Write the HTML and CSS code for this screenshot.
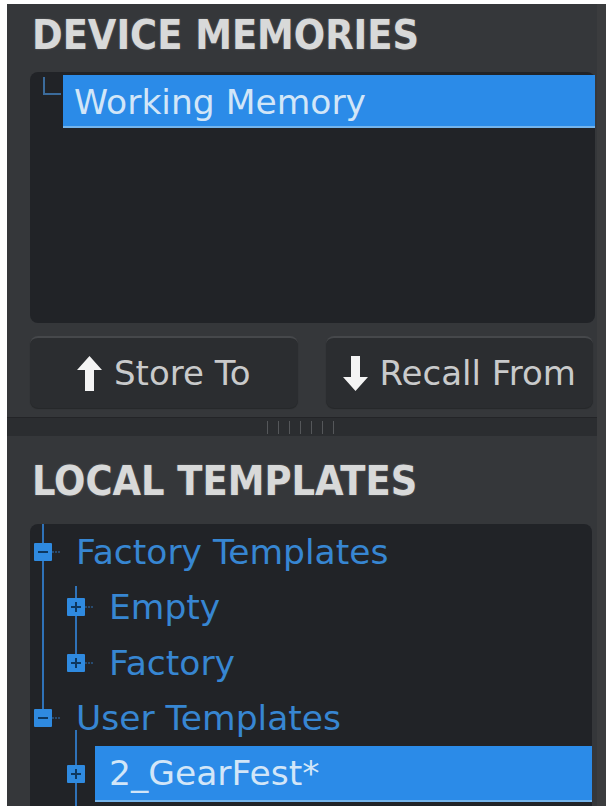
FILE: index.html
```html
<!DOCTYPE html>
<html lang="en">
<head>
  <meta charset="UTF-8">
  <title>Device Memories</title>
  <link rel="stylesheet" href="styles.css">
</head>
<body>
  <div class="panel">
    <section class="memories">
      <h2 class="heading">DEVICE MEMORIES</h2>
      <div class="list-box">
        <div class="mem-row">
          <span class="elbow"></span>
          <span class="mem-label">Working Memory</span>
        </div>
      </div>
      <div class="actions">
        <button class="action">
          <svg class="arrow" width="25" height="35" viewBox="0 0 25 35"><path d="M12.5 0 L25 14 H17 V35 H8 V14 H0 Z"/></svg>
          Store To
        </button>
        <button class="action">
          <svg class="arrow" width="25" height="35" viewBox="0 0 25 35"><path d="M12.5 35 L25 21 H17 V0 H8 V21 H0 Z"/></svg>
          Recall From
        </button>
      </div>
    </section>

    <div class="splitter"><span class="grip"></span></div>

    <section class="templates">
      <h2 class="heading">LOCAL TEMPLATES</h2>
      <div class="tree-box">
        <!-- connector lines of the tree -->
        <svg class="tree-lines" width="562" height="290">
          <line x1="13" y1="0" x2="13" y2="194"/>
          <line x1="46" y1="62" x2="46" y2="139"/>
          <line x1="46" y1="206" x2="46" y2="290"/>
          <line class="stub" x1="22" y1="28" x2="30" y2="28"/>
          <line class="stub" x1="22" y1="194" x2="30" y2="194"/>
          <line class="stub" x1="55" y1="83" x2="63" y2="83"/>
          <line class="stub" x1="55" y1="139" x2="63" y2="139"/>
        </svg>
        <div class="node lvl1">
          <svg class="toggle" viewBox="0 0 18 18"><rect width="18" height="18" rx="1"/><path d="M4 9 H14"/></svg>
          <span class="node-label">Factory Templates</span>
        </div>
        <div class="node lvl2">
          <svg class="toggle" viewBox="0 0 18 18"><rect width="18" height="18" rx="1"/><path d="M4 9 H14 M9 4 V14"/></svg>
          <span class="node-label">Empty</span>
        </div>
        <div class="node lvl2">
          <svg class="toggle" viewBox="0 0 18 18"><rect width="18" height="18" rx="1"/><path d="M4 9 H14 M9 4 V14"/></svg>
          <span class="node-label">Factory</span>
        </div>
        <div class="node lvl1">
          <svg class="toggle" viewBox="0 0 18 18"><rect width="18" height="18" rx="1"/><path d="M4 9 H14"/></svg>
          <span class="node-label">User Templates</span>
        </div>
        <div class="node lvl2 selected">
          <svg class="toggle" viewBox="0 0 18 18"><rect width="18" height="18" rx="1"/><path d="M4 9 H14 M9 4 V14"/></svg>
          <span class="node-label">2_GearFest*</span>
        </div>
      </div>
    </section>
  </div>
</body>
</html>
```

FILE: styles.css
```css
html, body {
  margin: 0;
  padding: 0;
  height: 100%;
  overflow: hidden;
  background: #fff;
  font-family: "DejaVu Sans", Verdana, sans-serif;
}
.panel {
  margin: 4px 0 0 7px;
  height: 802px;
  background: #35373a;
  border-right: 9px solid #3b3c3e;
  overflow: hidden;
}
.heading {
  margin: 0 0 0 2px;
  font-family: "DejaVu Sans Condensed", "DejaVu Sans", sans-serif;
  font-size: 41px;
  font-weight: bold;
  line-height: 48px;
  color: #d8d9d9;
  text-shadow: 0 0 2px rgba(255,255,255,0.25);
  white-space: nowrap;
}
.memories {
  padding: 7px 2px 0 23px;
}
.list-box {
  margin-top: 13px;
  height: 248px;
  padding-top: 3px;
  background: #212327;
  border-radius: 8px;
}
.mem-row {
  display: flex;
  height: 53px;
}
.elbow {
  width: 16px;
  height: 16px;
  margin: 2px 2px 0 13px;
  border-left: 2px solid #3b6b9b;
  border-bottom: 2px solid #3b6b9b;
}
.mem-label {
  flex: 1;
  display: flex;
  align-items: center;
  padding: 3px 0 0 11px;
  background: #2b8be8;
  border-bottom: 2px solid #74b4ec;
  color: #d2e6f8;
  font-size: 34.5px;
}
.actions {
  display: flex;
  gap: 28px;
  margin: 13px 2px 0 0;
}
.action {
  flex: 1;
  height: 72px;
  display: flex;
  align-items: center;
  justify-content: center;
  gap: 12px;
  padding: 0;
  background: #2b2d30;
  border: none;
  border-top: 2px solid #46484b;
  border-radius: 8px;
  color: #c9cacb;
  font-family: "DejaVu Sans", sans-serif;
  font-size: 34px;
  box-shadow: 0 1px 1px rgba(0,0,0,0.3);
}
.arrow {
  fill: #f4f4f4;
}
.splitter {
  margin-top: 9px;
  height: 18px;
  display: flex;
  justify-content: center;
  align-items: center;
  background: #2b2d30;
  border-top: 1px solid #232427;
}
.grip {
  width: 70px;
  height: 13px;
  background: repeating-linear-gradient(90deg, #55575a 0 1px, transparent 1px 11px);
}
.templates {
  padding: 21px 5px 0 23px;
}
.tree-box {
  position: relative;
  margin-top: 19px;
  height: 300px;
  background: #212327;
  border-radius: 8px 8px 0 0;
}
.tree-lines {
  position: absolute;
  left: 0;
  top: 0;
  stroke: #2f72b8;
  stroke-width: 2;
}
.tree-lines .stub {
  stroke-width: 1;
  stroke-dasharray: 2 1;
}
.node {
  display: flex;
  align-items: center;
  height: 55.5px;
  position: relative;
}
.toggle {
  width: 18px;
  height: 18px;
  margin-right: 10px;
  flex: none;
}
.toggle rect {
  fill: #2f8ae0;
}
.toggle path {
  stroke: #0e3860;
  stroke-width: 2;
}
.lvl1 .toggle {
  margin-left: 4px;
}
.lvl2 .toggle {
  margin-left: 37px;
}
.node-label {
  flex: 1;
  align-self: stretch;
  display: flex;
  align-items: center;
  padding-left: 14px;
  color: #3786d2;
  font-size: 34.5px;
  white-space: nowrap;
}
.selected .node-label {
  background: #2b8be8;
  border-bottom: 2px solid #74b4ec;
  color: #d2e6f8;
}
```
